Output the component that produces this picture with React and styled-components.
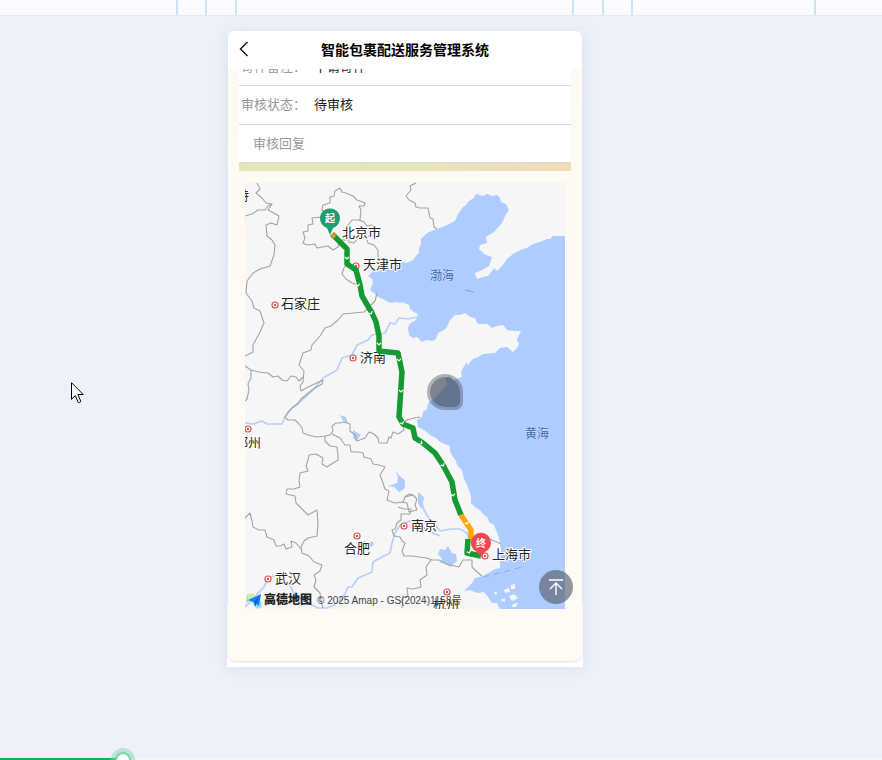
import React from 'react'

import styled, { createGlobalStyle } from 'styled-components';

const columns = [179, 27, 29, 340, 29, 27, 184, 67];

const seaPath = 'M565,236 553,236 550,239 547,239 540,242 533,244 527,248 520,250 513,254 507,259 502,266 497,271 494,268 492,271 488,276 483,277 477,279 475,273 482,270 489,266 492,257 486,255 483,253 479,249 480,245 487,243 486,237 491,234 495,231 502,223 505,216 509,210 506,204 501,202 500,198 497,195 492,196 487,194 483,196 476,194 474,198 472,199 468,202 466,205 463,207 458,214 455,221 447,225 437,229 427,233 421,239 421,244 419,248 419,253 416,256 413,260 407,263 403,262 397,264 392,268 385,270 379,271 372,272 368,276 372,279 373,283 370,290 374,293 378,297 385,300 390,303 396,302 400,303 402,302 409,305 410,309 414,312 418,314 416,320 410,323 408,328 409,335 413,338 417,337 422,342 426,340 433,341 436,339 438,333 444,330 447,327 450,320 455,315 460,315 465,313 470,317 475,318 478,324 487,324 492,328 497,326 503,325 507,330 514,331 521,331 518,337 517,340 519,344 517,348 513,352 507,347 500,348 495,353 483,354 478,357 473,359 470,362 468,366 467,362 463,368 461,372 462,377 453,380 450,376 445,378 447,385 440,392 435,398 428,403 427,409 423,412 422,417 417,420 418,427 424,430 430,435 436,438 440,442 450,446 450,451 453,457 456,461 457,465 462,470 464,479 468,487 471,496 471,503 475,507 480,510 483,514 488,518 489,522 494,525 496,530 498,535 500,542 501,550 500,560 500,568 495,569 490,572 483,576 475,578 472,583 467,588 464,591 470,590 477,593 484,592 488,597 492,603 497,603 500,609 565,609Z';

const borders = [
  '257,183 260,189 256,193 262,198 266,203 272,204 268,210 272,212 279,216 277,225 271,223 266,225 267,236 272,240 275,245 274,255 270,266 260,269 253,273 247,281 246,293 252,301 254,308 260,311 264,323 260,332 253,345 253,352 245,356',
  '272,204 268,206 265,210 258,210 252,214 245,216',
  '340,188 335,191 334,196 330,197 330,203 323,205 322,210 328,214 323,217 312,218 313,224 308,225 308,231 303,232 305,238 303,243 307,245 315,244 317,248 328,246 333,250 338,247 340,240 346,240',
  '340,188 342,192 346,193 353,196 357,200 365,203 364,206 359,206 361,210 360,220 352,220 348,225 350,232 347,237 349,242 354,243 358,238 366,237 368,243 374,245 378,250 378,258 386,261',
  '359,220 364,222 367,226 372,225 377,231 374,235 368,236',
  '347,264 344,268 342,274 346,279 352,283 358,285',
  '377,293 375,301 369,307 364,312 343,314 338,320 331,326 325,328 320,336 312,345 311,350 303,353 299,365 304,371 303,382 300,386 301,391 308,387 323,380 322,384 312,390 307,394 301,399 298,404 292,408 288,412 285,417 288,420 295,420 299,424 302,428 303,433 308,435 317,437 325,436 330,435',
  '245,366 251,370 259,372 268,373 273,377 278,376 282,380 287,381 291,376 296,377 299,381 303,377',
  '251,370 251,378 248,384 249,390 247,399 245,401',
  '330,435 333,431 332,426 336,423 340,423 344,422 350,424 350,431 355,435 357,441 365,438 369,432 374,434 378,438 379,443 387,443 389,437 391,438 393,432 398,434 404,430 402,424 407,420 414,418 420,417',
  '332,434 340,438 345,445 350,445 351,452 358,452 363,453 364,457 371,459 373,464 379,465 385,467 380,475 383,483 385,489 389,491 387,500 395,503 403,502 405,497 413,495',
  '325,436 325,441 330,446 337,447 338,455 338,460 333,463 327,467 322,464 323,458 316,454 309,455 308,460 306,466 308,471 300,473 299,481 300,487 294,489 287,489 286,494 295,496 296,503 303,510 308,515 317,510 318,523 317,536 308,538 304,541 301,547 302,553 309,556 314,562 322,565 320,571 314,575 316,580 314,587 320,593 321,601 323,608',
  '245,518 250,513 252,521 253,527 259,530 265,530 267,537 274,540 276,546 280,546 284,544 286,549 292,547 291,541 296,543 302,550',
  '405,497 409,494 413,495 417,499 415,505 417,510 409,512 407,503 401,502',
  '398,507 404,509 411,509 410,514 401,514 401,520 397,523 395,529 392,530 394,536 400,537 402,541 405,543 402,551 404,556 412,556 427,558 432,560 439,560 446,564 459,567 463,560 472,560 472,567 476,571 482,576',
  '431,560 426,567 427,575 420,580 421,587 413,589 407,588 408,596 403,598 402,608',
  '416,183 410,186 411,190 406,196 409,200 415,203 416,207 420,208 428,208 430,218 433,219 434,227 437,229',
];

const rivers = [
  '245,423 253,424 262,421 267,424 282,424 285,417 292,408 302,400 313,390 323,378 337,370 342,358 352,355 357,345 368,340 372,335 385,333 390,323 395,324 399,318 408,319 418,317',
  '245,607 252,600 260,591 264,587 268,579 273,576 280,579 290,585 293,592 303,600 312,605 318,608 327,608 334,605 340,600 345,594 348,587 352,587 358,578 372,572 373,562 382,557 390,553 392,543 395,533 400,525 410,521 417,523 424,528 431,532 440,536',
  '420,496 424,510 430,520 436,526 440,531 451,529 460,529 467,533 470,542',
];

const lakes = [
  '340,415 346,417 348,423 343,421',
  '353,430 361,435 356,441 353,438',
  '395,471 401,477 405,482 404,489 399,492 394,487 388,486 397,483 398,477',
  '400,477 405,480 405,487 401,489',
  '418,492 424,497 422,509 418,504',
  '359,541 365,541 367,544 372,541 374,544 369,549 366,544',
  '440,549 445,550 448,546 452,553 456,554 457,561 450,567 445,563 440,563 442,559 438,554',
  '247,595 254,594 250,603 246,602',
];

const islands = [
  '504,590 509,588 510,592 505,593', '511,585 515,584 515,589 511,589',
  '509,596 514,594 518,598 512,601', '500,600 505,598 505,602',
  '513,604 518,603 516,607 512,607', '494,592 497,592 496,596',
];

const cities = [
  { name: '北京市', x: 342, y: 237 },
  { name: '天津市', x: 363, y: 269, dot: [356, 266] },
  { name: '石家庄', x: 281, y: 308, dot: [275, 305] },
  { name: '济南', x: 360, y: 362, dot: [353, 358] },
  { name: '郑州', x: 235, y: 447, dot: [248, 429] },
  { name: '南京', x: 411, y: 530, dot: [404, 526] },
  { name: '合肥', x: 344, y: 553, dot: [357, 536] },
  { name: '武汉', x: 275, y: 583, dot: [268, 579] },
  { name: '杭州', x: 433, y: 609, dot: [447, 592] },
  { name: '上海市', x: 492, y: 559, dot: [485, 556] },
  { name: '呼和浩特', x: 197, y: 200 },
];

// x, y, angle of the small arrows along the route
const arrows = [
  [347, 258, 0], [358, 285, -15], [371, 313, -30], [379, 344, 0], [399, 360, -10],
  [401, 391, 0], [402, 423, -20], [421, 443, -60], [443, 465, -30], [453, 495, -10],
  [467, 523, -30], [469, 552, -20],
];

const RouteMap = () => {
  return (
    <svg viewBox="245 182 320 427" role="img" aria-label="配送路线">
      <rect x="245" y="182" width="320" height="427" fill="#f6f6f7" />
      <path d={seaPath} fill="#aeccff" />
      {islands.map((points) => <polygon key={points} points={points} fill="#f6f6f7" />)}
      {lakes.map((points) => <polygon key={points} points={points} fill="#afcdfc" />)}
      <g fill="none" strokeLinejoin="round">
        {rivers.map((points) => <polyline key={points} points={points} stroke="#b7cffa" strokeWidth="1.7" />)}
        {borders.map((points) => <polyline key={points} points={points} stroke="#a3a3a5" strokeWidth="1.1" />)}
        <path d="M465,290l9,2M490,539l11,5" stroke="#8ba3cc" />
        <path d="M483,577l43,-11" stroke="#8faad6" strokeDasharray="6 5" />
      </g>
      {cities.map(({ name, x, y, dot }) => (
        <g key={name}>
          {dot && <circle cx={dot[0]} cy={dot[1]} r="3" fill="#fff" stroke="#d9534f" strokeWidth="1.2" />}
          {dot && <circle cx={dot[0]} cy={dot[1]} r="1.2" fill="#d9534f" />}
          <CityName x={x} y={y}>{name}</CityName>
        </g>
      ))}
      <SeaName x="430" y="280">渤海</SeaName>
      <SeaName x="525" y="438">黄海</SeaName>
      <g fill="none" strokeWidth="5.500" strokeLinejoin="round">
        <path d="M332,234 347,249 347,264 356,270 360,285 362,296 372,313 376,322 379,336 379,351 398,353 402,372 399,417 403,424 413,428 415,438 423,443 435,453 443,465 452,482 455,500 461,515" stroke="#149a31" />
        <path d="M461,515 471,530 471,541" stroke="#ffa60b" />
        <path d="M468,539 467,553 481,556" stroke="#149a31" />
        <path d="M332,234l3,3" stroke="#e8932a" strokeWidth="4" />
      </g>
      {arrows.map(([x, y, angle]) => (
        <path key={`${x}-${y}`} d="M-2,-1 0,1 2,-1" fill="none" stroke="#fff" strokeWidth="1.2" transform={`translate(${x} ${y}) rotate(${angle})`} />
      ))}
      <path d="M330,235l-3,-7a10,10 0 1 1 6,0z" fill="#1d9f6c" />
      <PinText x="330" y="222">起</PinText>
      <path d="M481,557l-4,-5a10,10 0 1 1 8,0z" fill="#f4484f" />
      <PinText x="481" y="547">终</PinText>
      <path d="M248,594l6,-1 1,5 -4,6 -3,-2z" fill="#c3efac" />
      <path d="M252,603l9,-2 1,6 -5,2z" fill="#8fe4fa" />
      <path d="M248,600 261,594 259,606 255,603z" fill="#1681ff" />
      <path d="M254,602l7,-8 -6,13z" fill="#0b5fe0" />
      <BrandText x="264" y="604">高德地图</BrandText>
      <Copyright x="317" y="604">© 2025 Amap - GS(2024)1158号</Copyright>
    </svg>
  )
}

const App = () => {
  return (
    <Page>
      <GlobalStyle />
      <TopStrip>
        {columns.map((width, index) => <Column key={index} $width={width} />)}
      </TopStrip>
      <Stage>
        <Frame>
          <Phone>
            <Header>
              <button type="button" aria-label="返回">
                <svg width="10" height="16" viewBox="0 0 10 16" fill="none" stroke="#111" strokeWidth="1.4">
                  <path d="M8.500,1 1.500,8 8.500,15" />
                </svg>
              </button>
              <h1>智能包裹配送服务管理系统</h1>
            </Header>
            <Content>
              <Row $cut>
                <Label>寄件备注：</Label>
                <span>不请寄件</span>
              </Row>
              <Row>
                <Label>审核状态：</Label>
                <span>待审核</span>
              </Row>
              <Row $indent>
                <Label>审核回复</Label>
              </Row>
              <Divider />
              <MapBox>
                <RouteMap />
                <Loader />
              </MapBox>
            </Content>
            <TopButton type="button" aria-label="回到顶部">
              <svg width="16" height="18" viewBox="0 0 16 18" fill="none" stroke="#fff" strokeWidth="1.4">
                <path d="M1,2H15M8,17V5M2,11 8,5 14,11" />
              </svg>
            </TopButton>
          </Phone>
        </Frame>
      </Stage>
      <Pointer width="13" height="22" viewBox="0 0 13 22" aria-hidden="true">
        <path d="M0.500,0.700V17.300L4.300,13.600 7.200,20.300Q8.500,21.300 9.800,19.600L7,12.500H12.200Z" fill="#fff" stroke="#000" />
      </Pointer>
      <Progress type="range" min="0" max="1000" defaultValue="133" aria-label="播放进度" />
    </Page>
  )
}

export default App

const GlobalStyle = createGlobalStyle`
  *{
    box-sizing: border-box;
  }
  body{
    margin: 0;
    font-family: "Noto Sans CJK SC", sans-serif;
    color: #222;
  }
`

const Page = styled.main`
  position: relative;
  display: flex;
  flex-direction: column;
  min-height: 100vh;
  overflow: hidden;
  background: #ecf1fa;
`

const TopStrip = styled.div`
  display: flex;
  height: 16px;
  background: #f9fbff;
  border-bottom: 1px solid #e4ebf3;
`

const Column = styled.div`
  flex: ${({ $width }) => $width} 1 0;
  border-right: 2px solid #cfe2f8;
  &:last-child{
    border-right: none;
  }
`

const Stage = styled.div`
  display: grid;
  grid-template-columns: 227fr minmax(0, 356px) 299fr;
  padding: 15px 0 32px;
`

const Frame = styled.div`
  grid-column: 2;
  padding: 0 1px 6px;
  background: linear-gradient(transparent 90%, #fff 90%);
  box-shadow: 0 2px 12px rgba(120, 130, 160, 0.14);
`

const Phone = styled.section`
  position: relative;
  padding-bottom: 52px;
  border-radius: 8px;
  overflow: hidden;
  background: linear-gradient(#fef9f1, #fffbf4 40%);
  box-shadow: 0 1px 2px rgba(90, 90, 110, 0.2);
`

const Header = styled.header`
  display: grid;
  grid-template-columns: 32px 1fr 32px;
  align-items: center;
  height: 38px;
  padding-bottom: 2px;
  background: #fff;
  h1{
    margin: 0;
    font-size: 14px;
    line-height: 20px;
    text-align: center;
    color: #000;
  }
  button{
    display: flex;
    justify-content: center;
    padding: 0;
    border: none;
    background: none;
    cursor: pointer;
  }
`

const Content = styled.div`
  padding: 0 11px;
`

const Row = styled.div`
  display: flex;
  align-items: ${({ $cut }) => ($cut ? 'flex-end' : 'center')};
  height: ${({ $cut, $indent }) => ($cut ? '17px' : $indent ? '38px' : '39px')};
  padding: ${({ $cut, $indent }) => ($cut ? '0 2px 9px' : $indent ? '0 14px 2px' : '0 2px 2px')};
  overflow: hidden;
  border-bottom: 1px solid #d9d9d9;
  background: #fff;
  font-size: 13px;
  line-height: 20px;
`

const Label = styled.span`
  width: 73px;
  color: #999;
`

const Divider = styled.div`
  height: 8px;
  background: linear-gradient(90deg, #e3e7b8, #e8e4bb 60%, #f0dcb6);
`

const MapBox = styled.div`
  position: relative;
  margin: 11px 6px 0;
  svg{
    display: block;
    width: 100%;
    height: auto;
  }
`

const CityName = styled.text`
  font-size: 13px;
  fill: #222;
  stroke: #fff;
  stroke-width: 2px;
  paint-order: stroke;
`

const SeaName = styled.text`
  font-size: 12px;
  fill: #3867ad;
  stroke: #c9dcfa;
  stroke-width: 1px;
  paint-order: stroke;
`

const PinText = styled.text`
  font-size: 10px;
  font-weight: 700;
  fill: #fff;
  text-anchor: middle;
`

const BrandText = styled.text`
  font-size: 12px;
  font-weight: 900;
  fill: #222;
`

const Copyright = styled.text`
  font-family: "Liberation Sans", "Noto Sans CJK SC", sans-serif;
  font-size: 10px;
  fill: #444;
`

const Loader = styled.div`
  position: absolute;
  top: 45%;
  left: 57%;
  width: 36px;
  height: 36px;
  border: 3px solid rgba(70, 75, 85, 0.4);
  border-radius: 50% 50% 8px 50%;
  background: rgba(50, 55, 70, 0.6);
  background-clip: padding-box;
`

const TopButton = styled.button`
  position: absolute;
  right: 9px;
  bottom: 57px;
  display: flex;
  align-items: center;
  justify-content: center;
  width: 34px;
  height: 34px;
  padding: 0;
  border: none;
  border-radius: 50%;
  background: rgba(90, 95, 110, 0.65);
  cursor: pointer;
`

const Pointer = styled.svg`
  position: absolute;
  top: 382px;
  left: 71px;
`

const Progress = styled.input`
  position: absolute;
  left: 0;
  bottom: -12px;
  width: 100%;
  height: 24px;
  margin: 0;
  appearance: none;
  background: transparent;
  cursor: pointer;
  &::-webkit-slider-runnable-track{
    height: 4px;
    background: linear-gradient(90deg, #10b35c 13.5%, #f6f6f6 13.5%);
  }
  &::-webkit-slider-thumb{
    appearance: none;
    width: 16px;
    height: 16px;
    margin-top: -6px;
    border: 2px solid #7dd5a2;
    border-radius: 50%;
    background: #fff;
    box-shadow: 0 0 0 4px rgba(125, 213, 162, 0.45);
  }
`
